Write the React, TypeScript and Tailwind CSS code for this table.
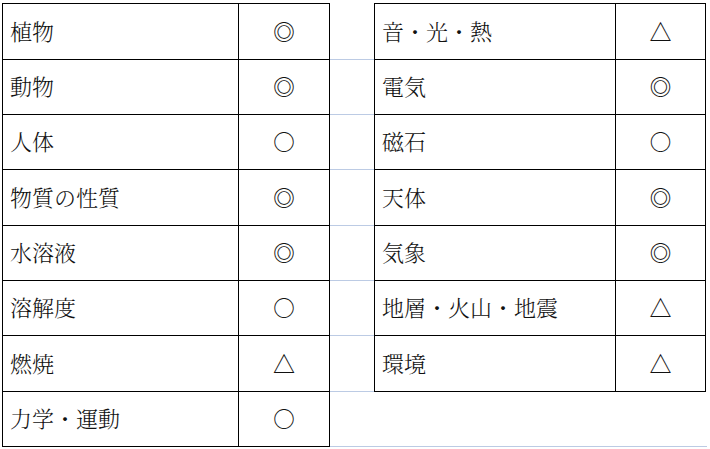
const leftRows = [
  ["植物", "◎"],
  ["動物", "◎"],
  ["人体", "○"],
  ["物質の性質", "◎"],
  ["水溶液", "◎"],
  ["溶解度", "○"],
  ["燃焼", "△"],
  ["力学・運動", "○"],
]

const rightRows = [
  ["音・光・熱", "△"],
  ["電気", "◎"],
  ["磁石", "○"],
  ["天体", "◎"],
  ["気象", "◎"],
  ["地層・火山・地震", "△"],
  ["環境", "△"],
]

// row heights include the 1px bottom border
const heights = ["h-[56px]", "h-[55px]", "h-[55px]", "h-[56px]", "h-[55px]", "h-[55px]", "h-[56px]", "h-[55px]"]

const font = { fontFamily: '"Noto Serif CJK JP", "IPAMincho", "Noto Sans CJK JP", serif' }

function Table({ rows, textW, markW }: { rows: string[][]; textW: string; markW: string }) {
  return (
    <div className="flex flex-col border-l border-t border-black">
      {rows.map(([label, mark], i) => (
        <div key={label} className={`flex ${heights[i]}`}>
          <div className={`${textW} flex items-center border-r border-b border-black pl-[7px] pb-[2px] text-[22px] font-light leading-none text-[#111]`}>
            {label}
          </div>
          <div className={`${markW} flex items-center justify-center border-r border-b border-black pb-[2px] text-[22px] font-light leading-none text-[#111]`}>
            {mark}
          </div>
        </div>
      ))}
    </div>
  )
}

export default function App() {
  return (
    <div className="w-[710px] h-[449px] bg-white overflow-hidden" style={font}>
      <div className="flex items-start pt-[3px] pl-[2px]">
        <Table rows={leftRows} textW="w-[236px]" markW="w-[91px]" />
        <div className="flex flex-col">
          <div className="flex items-start">
            <div className="flex w-[44px] flex-col pt-[1px]">
              {rightRows.map((r, i) => (
                <div key={r[0]} className={`${heights[i]} border-b border-[#bccbe4]`} />
              ))}
            </div>
            <Table rows={rightRows} textW="w-[241px]" markW="w-[90px]" />
          </div>
          <div className="h-[55px] w-[377px] border-b border-[#bccbe4]" />
        </div>
      </div>
    </div>
  )
}
